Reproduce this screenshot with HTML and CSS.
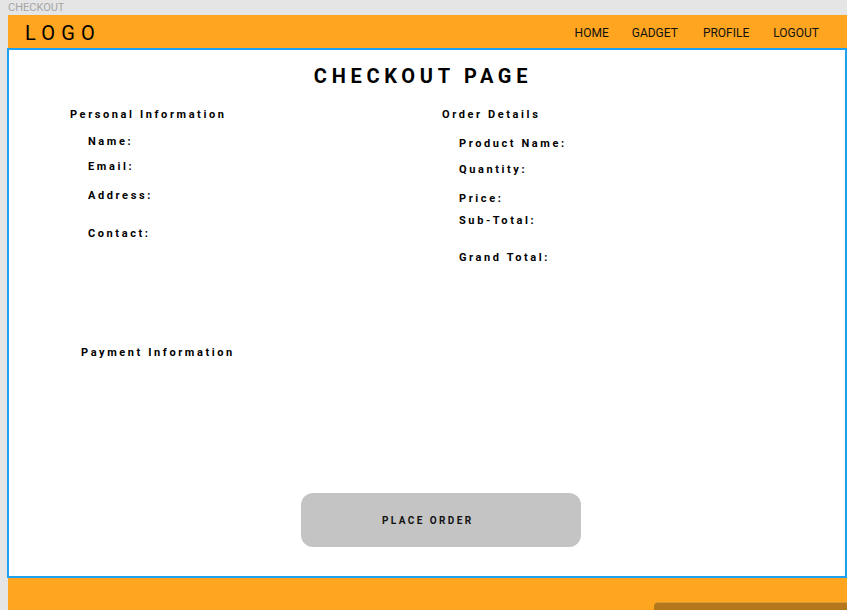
FILE: index.html
```html
<!DOCTYPE html>
<html>
<head>
<meta charset="utf-8">
<link rel="stylesheet" href="styles.css">
</head>
<body>
<div class="tab">CHECKOUT</div>
<header class="header">
  <div class="logo">LOGO</div>
  <nav class="nav">
    <a class="nav-home">HOME</a>
    <a class="nav-gadget">GADGET</a>
    <a class="nav-profile">PROFILE</a>
    <a class="nav-logout">LOGOUT</a>
  </nav>
</header>
<main class="main">
  <h1 class="title">CHECKOUT PAGE</h1>
  <div class="cols">
    <section class="col-left">
      <h2 class="section">Personal Information</h2>
      <div class="field f-name">Name:</div>
      <div class="field f-email">Email:</div>
      <div class="field f-address">Address:</div>
      <div class="field f-contact">Contact:</div>
    </section>
    <section class="col-right">
      <h2 class="section">Order Details</h2>
      <div class="field r-product">Product Name:</div>
      <div class="field r-qty">Quantity:</div>
      <div class="field r-price">Price:</div>
      <div class="field r-sub">Sub-Total:</div>
      <div class="field r-grand">Grand Total:</div>
    </section>
  </div>
  <h2 class="section payment">Payment Information</h2>
  <div class="actions">
    <button class="place">PLACE ORDER</button>
  </div>
</main>
<footer class="footer">
  <div class="footer-bar"></div>
</footer>
</body>
</html>
```
FILE: styles.css
```css
* { box-sizing: border-box; }
html, body { margin: 0; padding: 0; }
body {
  background: #e5e5e5;
  font-family: Roboto, "Liberation Sans", sans-serif;
  width: 847px;
  height: 610px;
  overflow: hidden;
  color: #000;
}
.tab {
  height: 15px;
  padding-left: 8px;
  padding-top: 1px;
  font-size: 11px;
  line-height: 14px;
  color: #a6a6a6;
}
.header {
  margin-left: 8px;
  height: 33px;
  background: #ffa51f;
  display: flex;
  align-items: center;
  justify-content: space-between;
  padding-top: 3px;
}
.logo {
  padding-left: 17px;
  font-size: 20px;
  letter-spacing: 6.2px;
  line-height: 30px;
}
.nav {
  display: flex;
  font-size: 12px;
  line-height: 30px;
  padding-right: 28px;
}
.nav a { color: #111; }
.nav-gadget { margin-left: 23px; }
.nav-profile { margin-left: 25px; }
.nav-logout { margin-left: 24px; }
.main {
  margin-left: 7px;
  width: 840px;
  height: 530px;
  border: 2px solid #1ea1f2;
  background: #fff;
  padding-top: 14px;
}
.title {
  margin: 0;
  text-align: center;
  font-size: 20px;
  line-height: 24px;
  letter-spacing: 4.7px;
  font-weight: 700;
  padding-right: 8px;
}
.cols {
  display: flex;
  margin-top: 20px;
}
.col-left { width: 372px; padding-left: 61px; }
.col-right { padding-left: 61px; }
.section {
  margin: 0;
  font-size: 11px;
  line-height: 14px;
  font-weight: 700;
  letter-spacing: 2.6px;
}
.field {
  font-size: 11px;
  line-height: 14px;
  font-weight: 700;
  letter-spacing: 2.6px;
  padding-left: 18px;
}
.f-name { margin-top: 13px; }
.f-email { margin-top: 11px; }
.f-address { margin-top: 15px; }
.f-contact { margin-top: 24px; }
.col-right .field { padding-left: 17px; }
.r-product { margin-top: 15px; }
.r-qty { margin-top: 12px; }
.r-price { margin-top: 15px; }
.r-sub { margin-top: 8px; }
.r-grand { margin-top: 23px; }
.payment {
  margin-top: 81px;
  padding-left: 72px;
}
.actions {
  display: flex;
  justify-content: center;
  margin-top: 133px;
}
.place {
  width: 280px;
  height: 54px;
  border: none;
  border-radius: 12px;
  background: #c4c4c4;
  font-family: Roboto, "Liberation Sans", sans-serif;
  font-size: 10px;
  font-weight: 700;
  letter-spacing: 2.4px;
  color: #111;
  margin-left: 28px;
  text-align: left;
  padding: 0 0 0 81px;
}
.footer {
  margin-left: 8px;
  height: 32px;
  background: #ffa51f;
  display: flex;
  justify-content: flex-end;
  align-items: flex-end;
}
.footer-bar {
  width: 193px;
  height: 8px;
  background: #b5771c;
  border-radius: 4px 0 0 0;
  border-top: 1px solid #d49a3a;
}
```
